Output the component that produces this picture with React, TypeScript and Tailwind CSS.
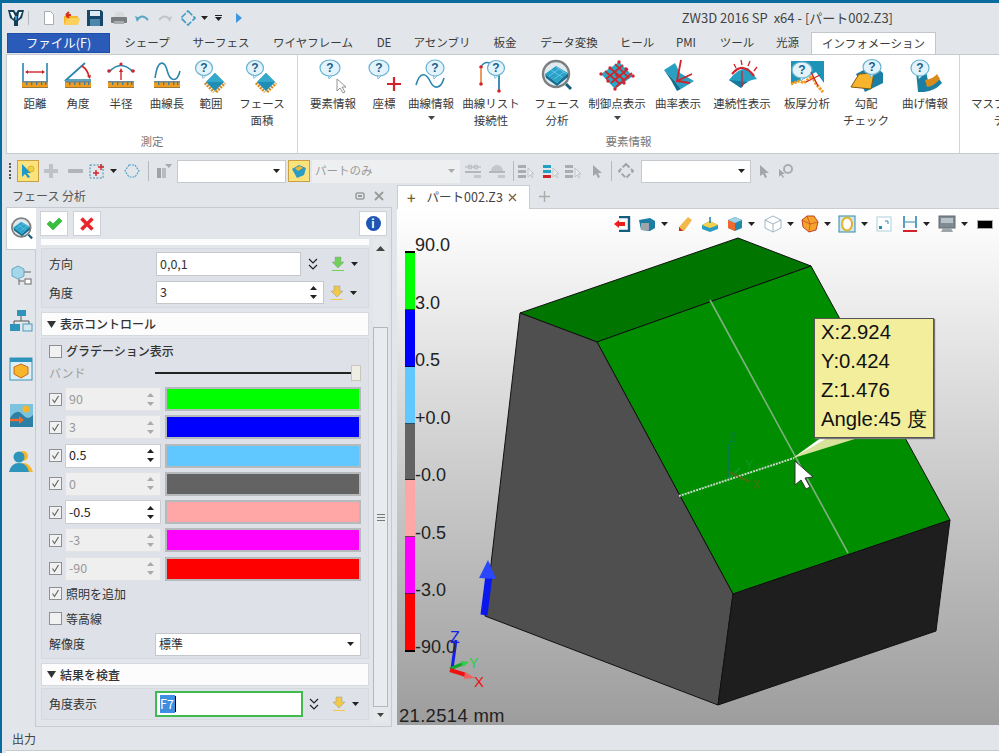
import type { ReactNode } from "react";

const TEAL = "#2a86ad";
const RED = "#d3232a";

function Svg({ w = 16, h = 16, children, className = "" }: { w?: number; h?: number; children: ReactNode; className?: string }) {
  return (
    <svg width={w} height={h} viewBox={`0 0 ${w} ${h}`} className={`shrink-0 ${className}`}>
      {children}
    </svg>
  );
}

function Caret({ color = "#222" }: { color?: string }) {
  return (
    <svg width="7" height="4" viewBox="0 0 7 4" className="shrink-0">
      <path d="M0 0h7L3.5 4z" fill={color} />
    </svg>
  );
}

function Ruler({ x = 5, y = 22 }: { x?: number; y?: number }) {
  return (
    <g>
      <rect x={x} y={y} width="26" height="7" fill="#f09a1e" />
      <rect x={x} y={y} width="26" height="1.5" fill="#6f8790" />
      <rect x={x} y={y + 6} width="26" height="1" fill="#9a7a3a" />
      {[4, 9, 14, 19, 23].map((d) => (
        <rect key={d} x={x + d} y={y + 1} width="1.4" height="3" fill="#3b7f9e" />
      ))}
    </g>
  );
}

function Bubble({ x, y, rx = 8.5, ry = 7.5 }: { x: number; y: number; rx?: number; ry?: number }) {
  return (
    <g>
      <path d={`M${x - 2} ${y + ry - 1}l1 4 4-4z`} fill="#e3f3fb" stroke="#69b1d0" strokeWidth="0.8" />
      <ellipse cx={x} cy={y} rx={rx} ry={ry} fill="#e3f3fb" stroke="#69b1d0" strokeWidth="1.2" />
      <text x={x} y={y + 4} textAnchor="middle" fontSize="12" fontWeight="700" fontFamily="Liberation Sans, sans-serif" fill="#1c5f8c">?</text>
    </g>
  );
}

function Chip({ x = 22, y = 22 }: { x?: number; y?: number }) {
  return (
    <g>
      <path d={`M${x - 10} ${y + 1}l9 9M${x + 1} ${y + 10}l9-9`} stroke="#d68a1e" strokeWidth="3" strokeDasharray="2 1" />
      <path d={`M${x} ${y - 9}l9 9-9 9-9-9z`} fill="#1f8db4" />
      <path d={`M${x} ${y - 9}l9 9-9 0-9 0z`} fill="#35a9cc" />
    </g>
  );
}

function Surface({ children }: { children?: ReactNode }) {
  return (
    <g>
      <path d="M5 21 Q14 9 24 9 L33 20 Q22 21 17 29 Z" fill="#27a0c4" />
      <path d="M5 21 L17 29 Q19 25 24 23" fill="#15789c" />
      {children}
    </g>
  );
}

const ribbonIcons: Record<string, ReactNode> = {
  dist: (
    <>
      <path d="M6 4v18M30 4v18" stroke={TEAL} strokeWidth="1.6" />
      <path d="M9 13h18" stroke={RED} strokeWidth="1.4" />
      <path d="M8 13l3-2v4zM28 13l-3-2v4z" fill={RED} />
      <Ruler />
    </>
  ),
  angle: (
    <>
      <path d="M25 4 L6 21 H31" stroke={TEAL} strokeWidth="1.7" fill="none" />
      <path d="M22 7 Q28 11 29 18" stroke={RED} strokeWidth="1.7" fill="none" />
      <path d="M27 17l4-1-1 4z" fill={RED} />
      <Ruler />
    </>
  ),
  radius: (
    <>
      <path d="M6 13 Q18 0 30 13" stroke={TEAL} strokeWidth="1.6" fill="none" />
      <circle cx="6" cy="12" r="1.8" fill={RED} />
      <circle cx="30" cy="12" r="1.8" fill={RED} />
      <circle cx="18" cy="5" r="1.6" fill={RED} />
      <path d="M18 21V12" stroke={RED} strokeWidth="1.4" />
      <path d="M18 9l-2 4h4z" fill={RED} />
      <Ruler />
    </>
  ),
  curve: (
    <>
      <path d="M6 19 C9 -2 16 3 18 11 C21 23 28 24 31 12" stroke={TEAL} strokeWidth="1.6" fill="none" />
      <Ruler />
    </>
  ),
  range: (
    <>
      <Bubble x={11} y={9} />
      <Chip x={22} y={23} />
    </>
  ),
  elem: (
    <>
      <Bubble x={15} y={9} rx={10} ry={8} />
      <path d="M22 20 l0 12 3-3 3 5 2-1-3-5 4 0z" fill="#fff" stroke="#888" strokeWidth="0.9" />
    </>
  ),
  coord: (
    <>
      <Bubble x={13} y={9} rx={10} ry={8} />
      <path d="M28 18v14M21 25h14" stroke={RED} strokeWidth="2.2" />
    </>
  ),
  cinfo: (
    <>
      <Bubble x={22} y={9} rx={9} ry={8} />
      <path d="M3 26 C7 12 13 14 17 22 C21 31 28 30 31 19" stroke={TEAL} strokeWidth="1.6" fill="none" />
    </>
  ),
  clist: (
    <>
      <path d="M8 25V10" stroke="#e8813a" strokeWidth="1.6" />
      <path d="M8 8 Q11 2 17 4" stroke={TEAL} strokeWidth="1.4" fill="none" />
      <path d="M26 15v16" stroke={TEAL} strokeWidth="1.8" />
      <circle cx="8" cy="8" r="1.8" fill={RED} />
      <circle cx="8" cy="25" r="1.8" fill={RED} />
      <circle cx="26" cy="32" r="1.8" fill={RED} />
      <Bubble x={23} y={9} rx={8.5} ry={7.5} />
    </>
  ),
  mag: (
    <>
      <circle cx="17" cy="15" r="13" fill="#dfe9ee" stroke="#7d7f80" strokeWidth="2.4" />
      <path d="M6 15 L17 7 L29 14 L18 24z" fill="#28a2ca" />
      <path d="M6 15 L18 24 L29 14 L29 18 L18 27 L7 19z" fill="#126f92" />
      <path d="M12 11l11 7M17 8l11 7M10 17l10-7M15 20l10-7" stroke="#7fd0ea" strokeWidth="0.7" />
      <path d="M27 25l5 5" stroke="#17607f" strokeWidth="3" />
    </>
  ),
  ctrl: (
    <>
      <path d="M2 15 L20 3 L34 17 L16 30z" fill="#29a8c8" />
      <path d="M6 12 L21 25M11 9 L26 22M16 5 L30 19M7 20 L24 6M12 24 L29 10M17 28 L33 14" stroke={RED} strokeWidth="1.7" />
      {[[2, 15], [20, 3], [34, 17], [16, 30], [11, 9], [27, 10], [25, 24], [9, 22], [18, 16]].map(([a, b]) => (
        <circle key={`${a}-${b}`} cx={a} cy={b} r="1.7" fill={RED} />
      ))}
    </>
  ),
  curv: (
    <>
      <path d="M4 11 L15 4 L20 14 L34 22 L21 30 Q13 19 4 11z" fill="#27a0c4" />
      <path d="M4 11 Q13 19 21 30 L17 32 Q11 20 4 11z" fill="#0f6f90" />
      <path d="M21 1 L17 22 L32 15 M17 22 L30 24" stroke={RED} strokeWidth="1.8" fill="none" />
    </>
  ),
  cont: (
    <>
      <Surface />
      <path d="M8 15 Q19 2 30 17" stroke={RED} strokeWidth="2.2" fill="none" />
      <path d="M12 9l-2-4M18 6l-1-5M24 7l2-5M30 12l3-4M18 12v16" stroke={RED} strokeWidth="1.3" />
    </>
  ),
  thick: (
    <>
      <path d="M2 2h33v22l-8-11-14 8-11 4z" fill="#1d93b8" />
      <Bubble x={13} y={11} rx={10} ry={8} />
      <path d="M2 25 L10 22 L15 24 L23 17 L27 25 L34 33" stroke="#f09a1e" strokeWidth="3" fill="none" strokeDasharray="2.5 1" />
      <path d="M17 23 L31 16M22 13 L29 27" stroke={RED} strokeWidth="1.2" />
    </>
  ),
  slope: (
    <>
      <path d="M8 15 L25 6 L35 14 V24 L17 33z" fill="#1a7fa3" />
      <path d="M11 15 L26 14 L23 30 L3 28z" fill="#f7b42c" stroke="#7c5a14" strokeWidth="1" />
      <Bubble x={24} y={8} rx={9} ry={7.5} />
    </>
  ),
  bend: (
    <>
      <path d="M9 12 L19 12 L21 22 Q27 21 30 17 L35 24 Q28 32 17 33 L11 33z" fill="#1a7fa3" />
      <path d="M18 21 Q26 20 30 15 L33 20 Q27 27 20 28z" fill="#d98c1c" />
      <Bubble x={13} y={9} rx={9} ry={8} />
    </>
  ),
  mass: (
    <>
      <Bubble x={22} y={9} rx={9} ry={8} />
      <path d="M15 18h10l2 3H13z" fill="#67b4d4" />
    </>
  ),
};

type RibbonItem = { w: number; icon: string; label: string; caret?: boolean };

const measureItems: RibbonItem[] = [
  { w: 42, icon: "dist", label: "距離" },
  { w: 44, icon: "angle", label: "角度" },
  { w: 42, icon: "radius", label: "半径" },
  { w: 50, icon: "curve", label: "曲線長" },
  { w: 38, icon: "range", label: "範囲" },
  { w: 64, icon: "range", label: "フェース\n面積" },
];

const infoItems: RibbonItem[] = [
  { w: 54, icon: "elem", label: "要素情報" },
  { w: 48, icon: "coord", label: "座標" },
  { w: 46, icon: "cinfo", label: "曲線情報", caret: true },
  { w: 74, icon: "clist", label: "曲線リスト\n接続性" },
  { w: 58, icon: "mag", label: "フェース\n分析" },
  { w: 62, icon: "ctrl", label: "制御点表示", caret: true },
  { w: 60, icon: "curv", label: "曲率表示" },
  { w: 68, icon: "cont", label: "連続性表示" },
  { w: 62, icon: "thick", label: "板厚分析" },
  { w: 56, icon: "slope", label: "勾配\nチェック" },
  { w: 62, icon: "bend", label: "曲げ情報" },
];

const tabs = [
  { w: 74, label: "シェープ" },
  { w: 74, label: "サーフェス" },
  { w: 110, label: "ワイヤフレーム" },
  { w: 32, label: "DE" },
  { w: 84, label: "アセンブリ" },
  { w: 42, label: "板金" },
  { w: 86, label: "データ変換" },
  { w: 50, label: "ヒール" },
  { w: 48, label: "PMI" },
  { w: 54, label: "ツール" },
  { w: 47, label: "光源" },
];

function RibbonButton({ item }: { item: RibbonItem }) {
  return (
    <div className="flex flex-col items-center" style={{ width: item.w }}>
      <svg width="36" height="34" viewBox="0 0 36 34" className="shrink-0 overflow-visible">
        {ribbonIcons[item.icon]}
      </svg>
      <div className="mt-[2px] whitespace-pre text-center text-[11.5px] leading-[17px] text-[#3a3a3a]">{item.label}</div>
      {item.caret && (
        <div className="mt-[4px]">
          <Caret color="#444" />
        </div>
      )}
    </div>
  );
}

function QuickBar() {
  return (
    <div className="flex h-[30px] items-center">
      <Svg w={18} h={20} className="ml-[5px]">
        <path d="M1 2h6l2 3 2-3h6l-2 8-4 3v5H7v-5L3 10z" fill="#123f58" />
        <path d="M3 4h3l2 4-2 3zM12 4h3l-2 5-2 2z" fill="#fff" />
        <path d="M8 8h2v4H8z" fill="#2d8fd0" />
      </Svg>
      <div className="ml-[3px] h-[14px] w-px bg-[#b4b8bc]" />
      <Svg w={14} h={16} className="ml-[13px]">
        <path d="M2.5 1.5h6l3 3v10h-9z" fill="#fff" stroke="#a9adb2" />
      </Svg>
      <Svg w={18} h={18} className="ml-[6px]">
        <path d="M2 7h14v9H2z" fill="#f7b52a" />
        <path d="M5 9h13l-2 7H2z" fill="#fbd15b" />
        <path d="M9 6H4M4 6l3-3M4 6l3 3" stroke="#d9301c" strokeWidth="2" fill="none" />
      </Svg>
      <Svg w={16} h={16} className="ml-[7px]">
        <path d="M0 0h14l2 2v14H0z" fill="#16476a" />
        <rect x="3" y="1" width="10" height="5" fill="#dce9f2" />
        <rect x="3" y="9" width="10" height="7" fill="#4d86ad" />
      </Svg>
      <Svg w={16} h={14} className="ml-[8px]">
        <rect x="0" y="6" width="16" height="6" rx="1" fill="#7a7d80" />
        <path d="M3 6l2-5h7l2 5z" fill="#d7d9db" />
        <rect x="3" y="10" width="10" height="3" fill="#a9abad" />
      </Svg>
      <Svg w={14} h={10} className="ml-[8px]">
        <path d="M2 7 Q7 0 13 7" stroke="#5aa7c6" strokeWidth="2" fill="none" />
        <path d="M0 3l5 2-3 4z" fill="#5aa7c6" />
      </Svg>
      <Svg w={14} h={10} className="ml-[9px]">
        <path d="M1 7 Q7 0 12 7" stroke="#c3c6c9" strokeWidth="2" fill="none" />
        <path d="M14 3l-5 2 3 4z" fill="#c3c6c9" />
      </Svg>
      <Svg w={16} h={16} className="ml-[8px]">
        <path d="M8 1 L15 8 L8 15 L1 8z" fill="none" stroke="#3b9cc4" strokeWidth="1.6" strokeDasharray="6 1.6" />
      </Svg>
      <div className="ml-[5px]"><Caret /></div>
      <div className="ml-[7px] flex flex-col items-center gap-[1px]">
        <div className="h-[1px] w-[7px] bg-[#222]" />
        <Caret />
      </div>
      <Svg w={8} h={12} className="ml-[13px]">
        <path d="M1 1l6 5-6 5z" fill="#3f97e0" />
      </Svg>
      <div className="ml-auto whitespace-pre pr-[106px] text-[13px] text-[#444]">ZW3D 2016 SP  x64 - [パート002.Z3]</div>
    </div>
  );
}

function TabRow() {
  return (
    <div className="flex h-[21px] pl-[5px]">
      <div className="flex h-[20px] w-[103px] items-center justify-center border border-[#1c4fa8] bg-[#2a5bb9] text-[12.5px] text-white">ファイル(F)</div>
      {tabs.map((t) => (
        <div key={t.label} className="flex h-[20px] items-center justify-center text-[11.5px] text-[#3a3a3a]" style={{ width: t.w }}>
          {t.label}
        </div>
      ))}
      <div className="relative z-10 -mt-px flex h-[22px] w-[125px] items-center justify-center border border-b-0 border-[#c2c7cc] bg-white text-[11.5px] text-[#3a3a3a]">インフォメーション</div>
    </div>
  );
}

function Ribbon() {
  return (
    <div className="ml-[4px] flex h-[100px] overflow-hidden border-y border-l border-[#c6cbd0] bg-white">
      <div className="flex w-[291px] shrink-0 flex-col border-r border-[#d3d6d9] pl-[7px]">
        <div className="flex flex-1 pt-[4px]">
          {measureItems.map((i) => <RibbonButton key={i.label} item={i} />)}
        </div>
        <div className="h-[20px] pr-[7px] text-center text-[11.5px] text-[#777]">測定</div>
      </div>
      <div className="flex w-[662px] shrink-0 flex-col border-r border-[#d3d6d9] pl-[8px]">
        <div className="flex flex-1 pt-[4px]">
          {infoItems.map((i) => <RibbonButton key={i.label} item={i} />)}
        </div>
        <div className="h-[20px] pr-[8px] text-center text-[11.5px] text-[#777]">要素情報</div>
      </div>
      <div className="pl-[9px] pt-[4px]">
        <RibbonButton item={{ w: 84, icon: "mass", label: "マスプロパティ\nデータ" }} />
      </div>
    </div>
  );
}

function GrayPointer({ className = "" }: { className?: string }) {
  return (
    <Svg w={12} h={14} className={className}>
      <path d="M2 1v11l3-2 2 4 2-1-2-4h4z" fill="#a3a7ab" />
    </Svg>
  );
}

function StackIcon({ check = false, className = "" }: { check?: boolean; className?: string }) {
  const c = check ? "#22a0c0" : "#a9adb1";
  return (
    <Svg w={18} h={16} className={className}>
      <rect x="1" y="2" width="8" height="3" fill={c} />
      <rect x="1" y="7" width="8" height="3" fill={c} />
      <rect x="1" y="12" width="8" height="3" fill={check ? "#d3232a" : c} />
      <path d="M11 5v9l2-2 2 3 1-1-2-3h3z" fill="#e9ecef" stroke="#b4b8bc" strokeWidth="0.7" />
    </Svg>
  );
}

function Toolbar() {
  return (
    <div className="flex h-[31px] items-center pt-[3px] text-[12px]">
      <div className="ml-[7px] h-[16px] w-[2px] border-l-2 border-dotted border-[#555]" />
      <div className="ml-[6px] flex h-[22px] w-[22px] items-center justify-center border border-[#c9a043] bg-[#fbe27a]">
        <Svg w={16} h={16}>
          <path d="M2 1v13l3-3 3 4 2-1-3-4h4z" fill="#2298c8" />
          <circle cx="11" cy="6" r="3" fill="#f3d13e" stroke="#c49c24" strokeWidth="0.6" />
        </Svg>
      </div>
      <Svg w={16} h={16} className="ml-[4px]"><path d="M6 1h4v5h5v4h-5v5H6v-5H1V6h5z" fill="#bfc3c7" /></Svg>
      <Svg w={16} h={16} className="ml-[8px]"><rect x="1" y="6" width="15" height="4" rx="1" fill="#b1b5b9" /></Svg>
      <Svg w={16} h={16} className="ml-[6px]">
        <rect x="1" y="2" width="13" height="13" fill="none" stroke="#3d8fae" strokeDasharray="2 1.4" />
        <path d="M7 7v6M4 10h6M12 1v6M9 4h6" stroke={RED} strokeWidth="1.4" />
      </Svg>
      <div className="ml-[5px]"><Caret /></div>
      <Svg w={16} h={16} className="ml-[7px]">
        <path d="M5 2h6l4 6-4 6H5L1 8z" fill="none" stroke="#4da3c6" strokeWidth="1.2" strokeDasharray="2 1" />
      </Svg>
      <div className="ml-[8px] h-[20px] w-px bg-[#b6babe]" />
      <Svg w={16} h={16} className="ml-[7px]">
        <rect x="1" y="5" width="4" height="10" fill="#a0a3a6" />
        <rect x="6" y="5" width="4" height="10" fill="#b9bcbf" />
        <path d="M9 1h7l-3 4z" fill="#a6a9ac" />
      </Svg>
      <div className="ml-[5px] flex h-[23px] w-[109px] items-center justify-end border border-[#c5c9cd] bg-white pr-[5px]"><Caret /></div>
      <div className="ml-[2px] flex h-[22px] w-[22px] items-center justify-center border border-[#c9a043] bg-[#fbe27a]">
        <Svg w={16} h={16}>
          <path d="M1 6l7-4 7 3-2 7-7 3z" fill="#2a9cc6" />
          <path d="M4 5l5-2 3 2-5 3z" fill="#f4b62f" />
        </Svg>
      </div>
      <div className="ml-[2px] flex h-[23px] w-[148px] items-center justify-between bg-[#eeeff0] pl-[3px] pr-[5px] text-[#9a9a9a]">
        <span className="text-[11.5px]">パートのみ</span>
        <Caret color="#aaa" />
      </div>
      <Svg w={18} h={16} className="ml-[4px]">
        <circle cx="6" cy="4" r="2" fill="none" stroke="#b4b8bc" />
        <circle cx="12" cy="4" r="2" fill="none" stroke="#b4b8bc" />
        <path d="M1 4h16" stroke="#b4b8bc" />
        <rect x="1" y="8" width="16" height="2" fill="#b4b8bc" />
        <rect x="10" y="12" width="7" height="3" fill="#c5c8cb" />
      </Svg>
      <Svg w={18} h={16} className="ml-[6px]">
        <path d="M3 8a6 6 0 0 1 12 0z" fill="#c5c8cb" />
        <rect x="1" y="8" width="16" height="2" fill="#b4b8bc" />
        <rect x="10" y="12" width="7" height="3" fill="#c5c8cb" />
      </Svg>
      <div className="ml-[7px] h-[20px] w-px bg-[#b6babe]" />
      <StackIcon className="ml-[3px]" />
      <StackIcon check className="ml-[7px]" />
      <StackIcon className="ml-[4px]" />
      <GrayPointer className="ml-[9px]" />
      <div className="ml-[8px] h-[20px] w-px bg-[#b6babe]" />
      <Svg w={16} h={16} className="ml-[6px]">
        <path d="M8 1l7 7-7 7-7-7z" fill="none" stroke="#a1a5a9" strokeWidth="2" strokeDasharray="5 2" />
      </Svg>
      <div className="ml-[7px] flex h-[23px] w-[110px] items-center justify-end border border-[#c5c9cd] bg-white pr-[5px]"><Caret /></div>
      <GrayPointer className="ml-[7px]" />
      <Svg w={16} h={16} className="ml-[8px]">
        <path d="M1 6v8l2-2 2 3 1-1-2-3h3z" fill="#a3a7ab" />
        <circle cx="10" cy="6" r="4" fill="none" stroke="#a9adb1" strokeWidth="2" />
      </Svg>
    </div>
  );
}

function SideTabs() {
  return (
    <div className="flex w-[33px] shrink-0 flex-col items-start pl-[4px]">
      <div className="relative z-10 -mr-px flex h-[43px] w-[30px] items-center justify-center border-y border-l border-[#c6cbd0] bg-white">
        <svg width="26" height="26" viewBox="0 0 36 34"><g>{ribbonIcons.mag}</g></svg>
      </div>
      <Svg w={24} h={24} className="ml-[3px] mt-[13px]">
        <path d="M3 6l6-3 6 3v7l-6 3-6-3z" fill="#a5d6ea" stroke="#3d92b5" strokeWidth="0.7" />
        <path d="M15 9h7M10 16v6M10 18h5" stroke="#666" fill="none" />
        <rect x="16" y="16" width="6" height="5" fill="#fff" stroke="#666" />
      </Svg>
      <Svg w={24} h={24} className="ml-[3px] mt-[22px]">
        <rect x="8" y="1" width="9" height="6" fill="#2d94bb" />
        <path d="M12 7v5M5 15v-3h15v3" stroke="#555" fill="none" />
        <rect x="1" y="15" width="10" height="7" fill="#2d94bb" />
        <rect x="14" y="15" width="9" height="7" fill="#d3e7f0" stroke="#4a9dbf" />
      </Svg>
      <Svg w={24} h={24} className="ml-[3px] mt-[24px]">
        <rect x="1" y="1" width="22" height="22" fill="#dceff7" stroke="#3d92b5" />
        <rect x="1" y="1" width="22" height="4" fill="#2d94bb" />
        <path d="M12 7l7 3v7l-7 4-7-4v-7z" fill="#f7b52a" stroke="#d0691e" />
      </Svg>
      <Svg w={24} h={24} className="ml-[3px] mt-[22px]">
        <rect x="1" y="1" width="23" height="23" fill="#7cc3df" />
        <path d="M1 15 Q8 4 14 12 Q19 18 24 12 V24 H1z" fill="#2d7fa3" />
        <circle cx="17" cy="6" r="3.5" fill="#f7b52a" />
        <path d="M1 17h10" stroke="#ee6a2c" strokeWidth="2.4" />
        <path d="M10 13l5 4-5 4z" fill="#ee6a2c" />
      </Svg>
      <Svg w={24} h={24} className="ml-[3px] mt-[22px]">
        <circle cx="14" cy="7" r="5" fill="#f7b52a" />
        <path d="M6 23 Q7 14 14 14 Q21 14 24 23z" fill="#f7b52a" />
        <circle cx="10" cy="8" r="5.5" fill="#2d94bb" />
        <path d="M0 23 Q2 14 10 14 Q18 14 20 23z" fill="#2d94bb" />
      </Svg>
    </div>
  );
}

function Spinner({ muted }: { muted?: boolean }) {
  const c = muted ? "#aaa" : "#222";
  return (
    <svg width="7" height="13" viewBox="0 0 7 13" className="shrink-0">
      <path d="M0 4l3.5-4L7 4zM0 9h7l-3.5 4z" fill={c} />
    </svg>
  );
}

function DownloadIcon({ color }: { color: string }) {
  return (
    <Svg w={14} h={16}>
      <path d="M4 1h6v5h3L7 12 1 6h3z" fill={color} stroke="#999" strokeWidth="0.5" />
      <rect x="1" y="14" width="12" height="1" fill={color} />
    </Svg>
  );
}

function FieldTools({ color, chevrons = true }: { color: string; chevrons?: boolean }) {
  return (
    <div className="flex items-center">
      {chevrons && (
        <Svg w={10} h={12} className="mr-[13px]">
          <path d="M1 1l4 4 4-4M1 7l4 4 4-4" stroke="#222" strokeWidth="1.2" fill="none" />
        </Svg>
      )}
      <DownloadIcon color={color} />
      <div className="ml-[6px]"><Caret /></div>
    </div>
  );
}

function CheckBox({ checked }: { checked?: boolean }) {
  return (
    <div className="flex h-[13px] w-[13px] shrink-0 items-center justify-center border border-[#8d8f92] bg-[#f1f1f1]">
      {checked && (
        <svg width="9" height="9" viewBox="0 0 9 9"><path d="M1.5 4.5l2 3 4-6.5" stroke="#666" strokeWidth="1.2" fill="none" /></svg>
      )}
    </div>
  );
}

function SectionHeader({ label, className = "" }: { label: string; className?: string }) {
  return (
    <div className={`mx-px flex items-center gap-[4px] border border-[#d6d9dd] bg-[#fcfcfc] pl-[5px] text-[12px] font-medium text-[#333] ${className}`}>
      <svg width="9" height="7" viewBox="0 0 9 7" className="shrink-0"><path d="M0 0h9L4.5 7z" fill="#333" /></svg>
      {label}
    </div>
  );
}

const bands = [
  { value: "90", color: "bg-[#00ff00]", on: false },
  { value: "3", color: "bg-[#0000ff]", on: false },
  { value: "0.5", color: "bg-[#60c8ff]", on: true },
  { value: "0", color: "bg-[#636363]", on: false },
  { value: "-0.5", color: "bg-[#ffa6a6]", on: true },
  { value: "-3", color: "bg-[#ff00ff]", on: false },
  { value: "-90", color: "bg-[#ff0000]", on: false },
];

function BandRow({ value, color, on }: { value: string; color: string; on: boolean }) {
  return (
    <div className="flex h-[24px] items-center">
      <CheckBox checked />
      <div className={`ml-[3px] flex h-[24px] w-[96px] items-center justify-between border pl-[3px] pr-[6px] text-[12.5px] ${on ? "border-[#c9ccd0] bg-white text-[#222]" : "border-[#e2e3e5] bg-[#efefef] text-[#999]"}`}>
        {value}
        <Spinner muted={!on} />
      </div>
      <div className={`ml-[4px] h-[24px] w-[196px] border-[2px] border-[#b7babd] ${color}`} />
    </div>
  );
}

function Panel() {
  return (
    <div className="flex w-[390px] shrink-0 flex-col">
      <div className="flex h-[22px] items-center pl-[10px] pr-[7px] text-[12px] text-[#555]">
        フェース 分析
        <Svg w={10} h={10} className="ml-auto">
          <rect x="1" y="2" width="8" height="6" rx="1" fill="none" stroke="#777" />
          <rect x="3" y="4" width="4" height="2" fill="#999" />
        </Svg>
        <Svg w={12} h={10} className="ml-[8px]">
          <path d="M2 1l8 8M10 1l-8 8" stroke="#999" strokeWidth="1.8" />
        </Svg>
      </div>
      <div className="flex flex-1">
        <SideTabs />
        <div className="flex w-[357px] flex-col border border-[#c6cbd0] bg-[#e2e6ea]">
          <div className="flex h-[31px] items-center pl-[4px] pr-[4px]">
            <div className="flex h-[25px] w-[28px] items-center justify-center border border-[#cdd1d5] bg-white">
              <svg width="16" height="14" viewBox="0 0 16 14"><path d="M1 7l3-3 3 3 6-6 3 3-9 9z" fill="#35c23a" stroke="#1f9a28" strokeWidth="0.5" /></svg>
            </div>
            <div className="ml-[5px] flex h-[25px] w-[28px] items-center justify-center border border-[#cdd1d5] bg-white">
              <svg width="16" height="16" viewBox="0 0 16 16"><path d="M2.5 2.5l11 11M13.5 2.5l-11 11" stroke="#e6282c" strokeWidth="3.6" /></svg>
            </div>
            <div className="ml-auto flex h-[25px] w-[28px] items-center justify-center border border-[#cdd1d5] bg-white">
              <div className="flex h-[15px] w-[15px] items-center justify-center rounded-full bg-[#1f55b5] text-[11px] font-bold leading-none text-white">i</div>
            </div>
          </div>
          <div className="flex flex-1 pl-[4px]">
            <div className="flex w-[330px] flex-col">
              <div className="mx-px h-[6px] bg-[#fcfcfc]" />
              <div className="mx-px mt-[3px] flex h-[60px] flex-col gap-[5px] border border-[#d6d9dd] bg-[#dee2e8] pl-[7px] pt-[3px] text-[12px] text-[#333]">
                <div className="flex h-[24px] items-center">
                  <span className="w-[107px]">方向</span>
                  <div className="flex h-[24px] w-[145px] items-center border border-[#c4c7cb] bg-white pl-[3px] text-[12.5px]">0,0,1</div>
                  <div className="ml-[7px]"><FieldTools color="#6fd05a" /></div>
                </div>
                <div className="flex h-[23px] items-center">
                  <span className="w-[107px]">角度</span>
                  <div className="flex h-[23px] w-[168px] items-center justify-between border border-[#c4c7cb] bg-white pl-[3px] pr-[6px] text-[12.5px]">3<Spinner /></div>
                  <div className="ml-[6px]"><FieldTools color="#f1c84a" chevrons={false} /></div>
                </div>
              </div>
              <SectionHeader label="表示コントロール" className="mt-[4px] h-[24px]" />
              <div className="mx-px mt-[2px] flex h-[321px] flex-col border border-[#d6d9dd] bg-[#dee2e8] pl-[7px] pt-[2px] text-[12px] text-[#333]">
                <div className="flex h-[20px] items-center gap-[4px]"><CheckBox /><span className="font-medium">グラデーション表示</span></div>
                <div className="mt-[2px] flex h-[20px] items-center">
                  <span className="w-[106px] text-[#a0a0a0]">バンド</span>
                  <div className="relative h-[2px] w-[206px] bg-[#222]">
                    <div className="absolute -top-[7px] right-0 h-[16px] w-[10px] border border-[#c9c7bb] bg-[#efeee5]" />
                  </div>
                </div>
                <div className="mt-[4px] flex flex-col gap-[4.3px]">
                  {bands.map((b) => <BandRow key={b.value} {...b} />)}
                </div>
                <div className="mt-[3px] flex h-[20px] items-center gap-[4px]"><CheckBox checked /><span>照明を追加</span></div>
                <div className="mt-[5px] flex h-[20px] items-center gap-[4px]"><CheckBox /><span>等高線</span></div>
                <div className="mt-[4px] flex h-[23px] items-center">
                  <span className="w-[106px]">解像度</span>
                  <div className="flex h-[23px] w-[206px] items-center justify-between border border-[#c4c7cb] bg-white pl-[3px] pr-[6px]">標準<Caret /></div>
                </div>
              </div>
              <SectionHeader label="結果を検査" className="mt-[4px] h-[23px]" />
              <div className="mx-px mt-[2px] flex h-[32px] items-center border border-[#d6d9dd] bg-[#dee2e8] pl-[7px] text-[12px] text-[#333]">
                <span className="w-[106px]">角度表示</span>
                <div className="flex h-[26px] w-[148px] items-center border-[2px] border-[#3fbb4f] bg-white pl-[3px] text-[12.5px]">
                  <span className="bg-[#3f8fe0] pr-[1px] text-white">F7</span>
                  <span className="h-[16px] w-px bg-black" />
                </div>
                <div className="ml-[6px]"><FieldTools color="#f1c84a" /></div>
              </div>
            </div>
            <div className="ml-[3px] flex w-[15px] flex-col items-center bg-[#e6e9ec]">
              <div className="flex h-[18px] items-center"><svg width="9" height="5" viewBox="0 0 9 5"><path d="M0 5h9L4.500 0z" fill="#444" /></svg></div>
              <div className="mt-[70px] flex h-[380px] w-[15px] flex-col items-center justify-center border border-[#b4b8bd] bg-[#e9ecef]">
                <div className="flex flex-col gap-[2px]">
                  <div className="h-px w-[8px] bg-[#777]" />
                  <div className="h-px w-[8px] bg-[#777]" />
                  <div className="h-px w-[8px] bg-[#777]" />
                </div>
              </div>
              <div className="flex flex-1 items-center"><Caret color="#444" /></div>
            </div>
          </div>
          <div className="h-[4px]" />
        </div>
      </div>
    </div>
  );
}

const viewIcons: ReactNode[] = [
  <Svg key="exit" w={18} h={16}>
    <path d="M6 1h10v14H6" fill="none" stroke="#125d80" strokeWidth="2.4" />
    <path d="M1 8l5-4v2h6v4H6v2z" fill="#ee1c1c" />
  </Svg>,
  <Svg key="cam" w={18} h={16}>
    <path d="M1 4l11-2 5 3v7l-5 3-9-1z" fill="#1d7da3" />
    <rect x="3" y="7" width="8" height="7" fill="#9ea4a8" />
  </Svg>,
  <Svg key="pen" w={16} h={16}><path d="M11 1l4 3-8 11-5 0 0-4z" fill="#f2b94a" /><path d="M2 11l4 4-4 0z" fill={RED} /></Svg>,
  <Svg key="box1" w={18} h={16}><path d="M9 5l8 4v4l-8 3-8-3V9z" fill="#2b9cc4" /><path d="M9 5l8 4-8 3-8-3z" fill="#f7d14b" /><path d="M9 1v6" stroke="#1e7fa5" strokeWidth="1.5" /></Svg>,
  <Svg key="box2" w={16} h={16}><path d="M8 1l7 3v8l-7 3-7-3V4z" fill="#2488ad" /><path d="M1 4l7 3v8l-7-3z" fill="#ee6a2c" /><path d="M8 1l7 3-7 3-7-3z" fill="#9ed3e6" /></Svg>,
  <Svg key="cube" w={18} h={18}><path d="M9 1l8 4v8l-8 4-8-4V5zM1 5l8 4 8-4M9 9v8" fill="#fff" stroke="#9fb7c2" /></Svg>,
  <Svg key="poly" w={18} h={18}><path d="M6 1h7l4 6-2 8-7 2-6-5-1-7z" fill="#f4a62c" stroke="#c5412b" /><path d="M9 9L6 1M9 9l8-2M9 9l-1 8M9 9L1 5" stroke="#c5412b" strokeWidth="0.7" /></Svg>,
  <Svg key="ring" w={18} h={18}><rect x="1" y="1" width="16" height="16" fill="#cfe7f1" stroke="#2f88ad" /><ellipse cx="9" cy="9" rx="5" ry="6.500" fill="#fff" stroke="#e3b32b" strokeWidth="2" /></Svg>,
  <Svg key="frame" w={16} h={16}><rect x="1" y="1" width="14" height="14" fill="#fff" stroke="#aecfdd" /><rect x="3" y="10" width="3" height="3" fill="#2f88ad" /><path d="M9 5h3v3" stroke="#2f88ad" fill="none" /></Svg>,
  <Svg key="dim" w={16} h={18}><path d="M2 1v12M14 1v12" stroke="#2f88ad" strokeWidth="1.6" /><path d="M3 7h10" stroke="#2f88ad" /><rect x="1" y="15" width="14" height="2" fill={RED} /></Svg>,
  <Svg key="mon" w={18} h={18}><rect x="1" y="1" width="16" height="12" fill="#7f8a92" stroke="#626a70" /><rect x="3" y="3" width="12" height="5" fill="#b8c2c9" /><path d="M5 13h8l2 4H3z" fill="#9fa5a9" /></Svg>,
  <div key="swatch" className="h-[9px] w-[16px] border border-[#aaa] bg-black" />,
];

const viewIconSlots: { x: number; caret?: boolean }[] = [
  { x: 613 }, { x: 638, caret: true }, { x: 677 }, { x: 701 }, { x: 727, caret: true }, { x: 764, caret: true },
  { x: 801, caret: true }, { x: 838, caret: true }, { x: 876 }, { x: 902, caret: true }, { x: 938, caret: true }, { x: 977 },
];

const legend = [
  { label: "90.0", y: 245 }, { label: "3.0", y: 303 }, { label: "0.5", y: 360 }, { label: "+0.0", y: 418 },
  { label: "-0.0", y: 475 }, { label: "-0.5", y: 533 }, { label: "-3.0", y: 590 }, { label: "-90.0", y: 647 },
];

const legendBars = ["bg-[#00ff00]", "bg-[#0000ff]", "bg-[#60c8ff]", "bg-[#636363]", "bg-[#ffa6a6]", "bg-[#ff00ff]", "bg-[#ff0000]"];

function Viewport() {
  // canvas coordinates below are relative to the viewport's top-left (397, 209)
  return (
    <div className="relative ml-[5px] mb-[2px] flex-1 overflow-hidden">
      <div className="flex h-[24px] items-center border-b border-[#c9cdd2]">
        <div className="flex h-[24px] w-[133px] items-center border border-b-0 border-[#c9cdd2] bg-white pl-[9px] text-[12.5px] text-[#444]">
          <span className="mr-[11px] text-[15px] font-medium leading-none text-[#7a6235]">+</span>
          パート002.Z3
          <svg width="9" height="9" viewBox="0 0 9 9" className="ml-[5px]"><path d="M1 1l7 7M8 1l-7 7" stroke="#7a6235" strokeWidth="1.3" /></svg>
        </div>
        <svg width="11" height="11" viewBox="0 0 11 11" className="ml-[9px]"><path d="M5.500 0v11M0 5.500h11" stroke="#aaa" strokeWidth="1.4" /></svg>
      </div>
      <div className="relative h-[516px] bg-linear-to-b from-white to-[#9d9d9d]">
        <svg width="602" height="516" viewBox="397 209 602 516" className="absolute left-0 top-0">
          <polygon points="520,313 738,238 811,266 597,342" fill="#007500" stroke="#111" strokeWidth="1" />
          <polygon points="597,342 811,266 950,520 733,594" fill="#008e00" stroke="#111" strokeWidth="1" />
          <polygon points="520,313 597,342 733,594 718,705 485,616" fill="#4f4f4f" stroke="#111" strokeWidth="1" />
          <polygon points="733,594 950,520 936,631 718,705" fill="#1e1e1e" stroke="#111" strokeWidth="1" />
          <path d="M710 300L848 553" stroke="#7fb07f" strokeWidth="1.6" />
          <path d="M679 496L794 458" stroke="#c9d9c9" strokeWidth="2" strokeDasharray="2 1" />
          <g opacity="0.6">
            <path d="M729 478V444" stroke="#0b6f74" strokeWidth="2" />
            <path d="M729 478L740 468" stroke="#0f9d3f" strokeWidth="2" />
            <path d="M729 472L750 482" stroke="#7a5a1a" strokeWidth="2" />
            <text x="729" y="442" fontSize="13" fill="#0b6f74" fontFamily="Liberation Sans, sans-serif">Z</text>
            <text x="745" y="469" fontSize="13" fill="#1a9d3f" fontFamily="Liberation Sans, sans-serif">Y</text>
            <text x="752" y="489" fontSize="13" fill="#7a5a1a" fontFamily="Liberation Sans, sans-serif">X</text>
          </g>
          <path d="M484 615L489 575" stroke="#0a18ee" strokeWidth="7" />
          <path d="M479 578L488 560L496 579z" fill="#2a47ff" />
          <path d="M452 669L456 640" stroke="#1420e6" strokeWidth="3" />
          <path d="M450 669L462 664" stroke="#0fa82a" strokeWidth="3.5" />
          <path d="M461 661L469 662L463 667z" fill="#2fce4a" />
          <path d="M450 670L466 675" stroke="#ee1111" strokeWidth="4" />
          <path d="M465 672L475 678L464 679z" fill="#f06060" />
          <path d="M793 458L823 438H858L800 456z" fill="#d9e29a" />
          <path d="M793 458L822 437L829 437L798 455z" fill="#fff" />
          <path d="M795 461v24l6-5 5 9 4-2-5-9 8-1z" fill="#fff" stroke="#333" strokeWidth="1" />
        </svg>
        {viewIconSlots.map((s, i) => (
          <div key={s.x} className="absolute top-[6px] flex h-[18px] items-center gap-[5px]" style={{ left: s.x - 397 }}>
            {viewIcons[i]}
            {s.caret && <Caret />}
          </div>
        ))}
        <div className="absolute left-[8px] top-[42px] flex h-[401px] w-[10px] flex-col border-y-2 border-black">
          {legendBars.map((c) => <div key={c} className={`flex-1 border-b border-black/60 last:border-b-0 ${c}`} />)}
        </div>
        {legend.map((l) => (
          <div key={l.label} className="absolute left-[18px] font-['Liberation_Sans',sans-serif] text-[18px] leading-[20px] text-[#222]" style={{ top: l.y - 219 }}>
            {l.label}
          </div>
        ))}
        <span className="absolute left-[53px] top-[421px] font-['Liberation_Sans',sans-serif] text-[16px] leading-none text-[#1420e6]">Z</span>
        <span className="absolute left-[72px] top-[447px] font-['Liberation_Sans',sans-serif] text-[14px] leading-none text-[#22d04a]">Y</span>
        <span className="absolute left-[77px] top-[465px] font-['Liberation_Sans',sans-serif] text-[15px] leading-none text-[#ee1111]">X</span>
        <div className="absolute left-[2px] top-[497px] font-['Liberation_Sans',sans-serif] text-[18.5px] leading-[20px] tracking-[0.3px] text-[#222]">21.2514 mm</div>
        <div className="absolute left-[417px] top-[109px] h-[120px] w-[120px] border border-[#555] bg-[#f2ee9c] pl-[6px] font-['Liberation_Sans',sans-serif] text-[20.3px] leading-[29px] text-[#111] shadow-[1px_1px_1px_#777]">
          <div className="-mt-px">X:2.924</div>
          <div>Y:0.424</div>
          <div>Z:1.476</div>
          <div className="whitespace-nowrap">Angle:45 度</div>
        </div>
      </div>
    </div>
  );
}

export default function App() {
  return (
    <div className="flex h-[753px] w-[999px] flex-col overflow-hidden border-l-2 border-t-[3px] border-[#0a6c9e] bg-[#e2e6ea] font-['Noto_Sans_CJK_JP','Noto_Sans',sans-serif]">
      <QuickBar />
      <TabRow />
      <Ribbon />
      <Toolbar />
      <div className="flex h-[542px]">
        <Panel />
        <Viewport />
      </div>
      <div className="flex h-[23px] items-center pl-[10px] text-[12px] text-[#444]">出力</div>
      <div className="ml-[4px] flex-1 border-t border-[#c6cbd0] bg-white" />
    </div>
  );
}
